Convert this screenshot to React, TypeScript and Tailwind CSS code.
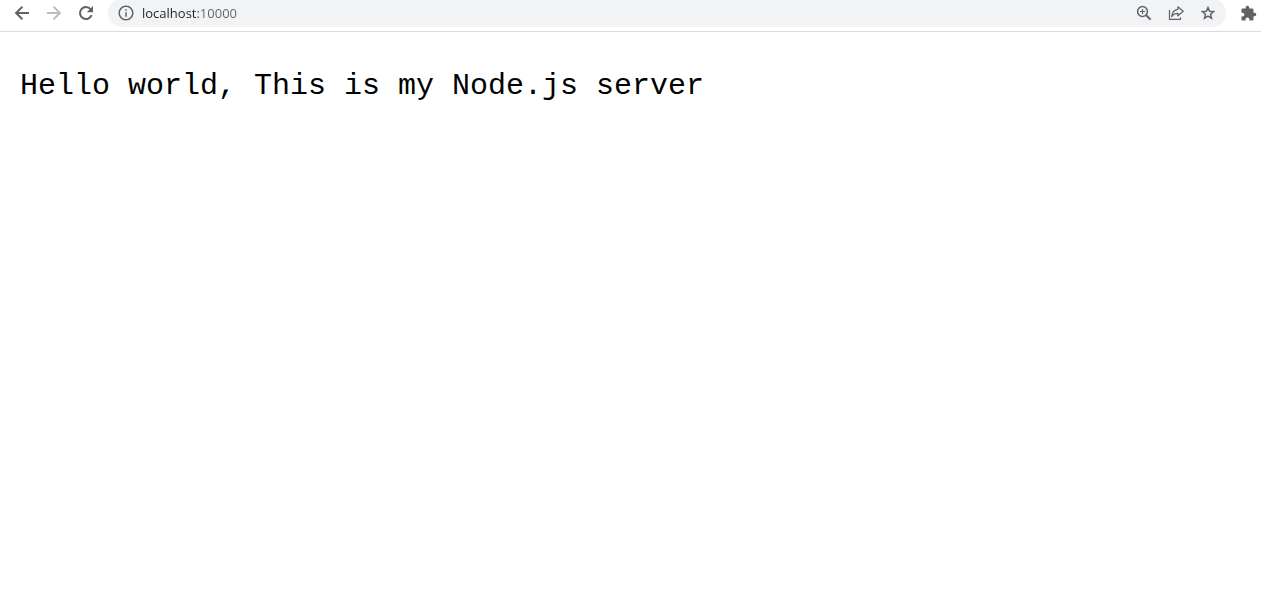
import type { ReactNode } from "react";
import { MdExtension, MdInfoOutline } from "react-icons/md";

function IconButton({ label, disabled, children }: { label: string; disabled?: boolean; children: ReactNode }) {
  return (
    <button
      type="button"
      aria-label={label}
      disabled={disabled}
      className="flex h-7 w-8 shrink-0 items-center justify-center text-[#5f6368] disabled:text-[#babcbe]"
    >
      {children}
    </button>
  );
}

function BackIcon() {
  return (
    <svg width="16" height="16" viewBox="0 0 16 16" fill="none" stroke="currentColor" strokeWidth="2" aria-hidden="true">
      <path d="M15 8H2.5M8.4 1.7L2.1 8L8.4 14.3" />
    </svg>
  );
}

function ForwardIcon() {
  return (
    <svg width="16" height="16" viewBox="0 0 16 16" fill="none" stroke="currentColor" strokeWidth="2" aria-hidden="true">
      <path d="M1 8H13.5M7.6 1.7L13.9 8L7.6 14.3" />
    </svg>
  );
}

function ReloadIcon() {
  return (
    <svg width="16" height="16" viewBox="0 0 16 16" aria-hidden="true">
      <path
        d="M13.6 10.2A6 6 0 1 1 12.6 4.2"
        fill="none"
        stroke="currentColor"
        strokeWidth="2"
      />
      <path d="M15 1V7.2H8.8Z" fill="currentColor" />
    </svg>
  );
}

function ZoomIcon() {
  return (
    <svg width="16" height="16" viewBox="0 0 16 16" fill="none" stroke="currentColor" aria-hidden="true">
      <circle cx="6.5" cy="6.5" r="4.9" strokeWidth="1.5" />
      <path d="M10.2 10.2L14.6 14.6" strokeWidth="2" />
      <path d="M6.5 4V9M4 6.5H9" strokeWidth="1.2" />
    </svg>
  );
}

function ShareIcon() {
  return (
    <svg width="16" height="16" viewBox="0 0 16 16" fill="none" stroke="currentColor" aria-hidden="true">
      <path d="M1.5 5V14.4H12.5V12.5" strokeWidth="1.2" />
      <path
        d="M9.9 1.8L15.2 6.3L9.9 10.8V8.3C7 8.2 5.2 9.2 3.6 11.6C4.1 7.6 6.2 4.7 9.9 4.3Z"
        strokeWidth="1.2"
        strokeLinejoin="round"
      />
    </svg>
  );
}

function StarIcon() {
  return (
    <svg width="16" height="16" viewBox="0 0 16 16" fill="none" stroke="currentColor" aria-hidden="true">
      <path
        d="M8 2.6L9.6 6.2L13.6 6.6L10.6 9.3L11.5 13.2L8 11.1L4.5 13.2L5.4 9.3L2.4 6.6L6.4 6.2Z"
        strokeWidth="1.5"
      />
    </svg>
  );
}

export default function App() {
  return (
    <div className="min-h-screen bg-white">
      <header className="overflow-hidden border-b border-[#dadce0] pb-1">
        <div className="-mt-px flex items-center pl-1.5">
          <IconButton label="Back">
            <BackIcon />
          </IconButton>
          <IconButton label="Forward" disabled>
            <ForwardIcon />
          </IconButton>
          <IconButton label="Reload">
            <ReloadIcon />
          </IconButton>
          <div className="ml-1.5 flex h-7 min-w-0 flex-1 items-center rounded-full bg-[#f1f3f4] px-0.5">
            <IconButton label="View site information">
              <MdInfoOutline size={18} />
            </IconButton>
            <input
              type="text"
              aria-label="Address"
              defaultValue="localhost:10000"
              spellCheck={false}
              className="h-7 min-w-0 flex-1 bg-[linear-gradient(to_right,#202124_56px,#5f6368_56px)] bg-clip-text font-['Open_Sans',sans-serif] text-[13px] text-transparent caret-black outline-none"
            />
            <IconButton label="Zoom">
              <ZoomIcon />
            </IconButton>
            <IconButton label="Share this page">
              <ShareIcon />
            </IconButton>
            <IconButton label="Bookmark this tab">
              <StarIcon />
            </IconButton>
          </div>
          <button type="button" aria-label="Extensions" className="mr-1 ml-3.5 shrink-0 text-[#5f6368]">
            <MdExtension size={17} />
          </button>
        </div>
      </header>
      <main className="px-5 pt-[34px]">
        <pre className="font-['Liberation_Mono',monospace] text-[30px] leading-10 whitespace-pre-wrap text-black">
          Hello world, This is my Node.js server
        </pre>
      </main>
    </div>
  );
}
